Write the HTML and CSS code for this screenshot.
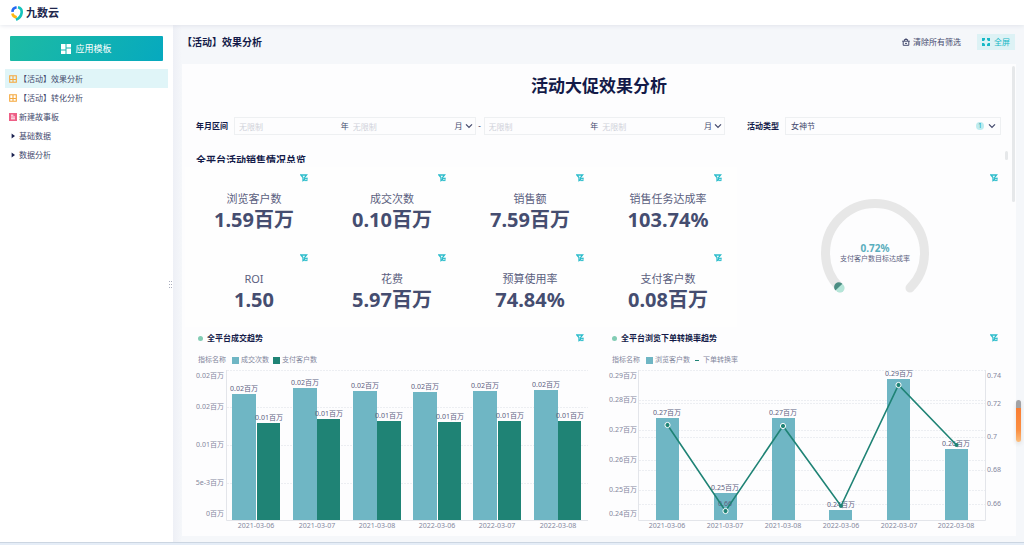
FILE: index.html
```html
<!DOCTYPE html>
<html lang="zh-CN">
<head>
<meta charset="utf-8">
<title>九数云</title>
<link rel="stylesheet" href="styles.css">
</head>
<body>
<svg class="defs" aria-hidden="true">
  <symbol id="filter" viewBox="0 0 8 8">
    <path d="M0.8 1H6.6L4.7 3.4V5.6L3 6.6V3.6Z" fill="none" stroke="currentColor" stroke-width="1.3"/>
    <path d="M4.6 4.4H7.4M7 3.6V6.4M4.4 6.6H7.4" fill="none" stroke="currentColor" stroke-width="1"/>
  </symbol>
  <symbol id="chevron" viewBox="0 0 8 8">
    <path d="M1 2.4L4 5.4L7 2.4" fill="none" stroke="currentColor" stroke-width="1.3"/>
  </symbol>
  <symbol id="board" viewBox="0 0 8 8">
    <path d="M0.7 0.7H7.3V7.3H0.7ZM4 0.7V7.3M0.7 4.5H7.3" fill="none" stroke="#f5a83c" stroke-width="1.1"/>
  </symbol>
</svg>

<header class="topbar">
  <svg class="logo" viewBox="0 0 12 16" fill="none" stroke-width="2.6">
    <path d="M1.4 6.8A5 5 0 0 1 5.6 2.2" stroke="#2468f2"/>
    <path d="M1.4 8.4A5 5 0 0 0 5.8 12.4" stroke="#fdb713"/>
    <path d="M7 2.2C9.8 2.8 11 5 10.6 8C10.2 11 8.4 13.2 5 14.8" stroke="#14c3bd"/>
  </svg>
  <span class="brand">九数云</span>
</header>

<div class="shell">
  <nav class="sidebar">
    <button class="template-btn" type="button">
      <svg viewBox="0 0 10 10" fill="#fff"><path d="M0 0H4.5V5.5H0ZM5.5 0H10V3.5H5.5ZM0 6.5H4.5V10H0ZM5.5 4.5H10V10H5.5Z"/></svg>
      应用模板
    </button>
    <a class="item active" href="#"><svg><use href="#board"/></svg><span>【活动】效果分析</span></a>
    <a class="item" href="#"><svg><use href="#board"/></svg><span>【活动】转化分析</span></a>
    <a class="item" href="#"><svg viewBox="0 0 8 8"><rect width="8" height="8" fill="#ee5f86"/><path d="M2 2.2H4.4M2 4H6M2 5.8H6" stroke="#fff" stroke-width="1"/></svg><span>新建故事板</span></a>
    <a class="item" href="#"><svg viewBox="0 0 8 8"><path d="M2.6 1.6L6 4L2.6 6.4Z" fill="#1b2250"/></svg><span>基础数据</span></a>
    <a class="item" href="#"><svg viewBox="0 0 8 8"><path d="M2.6 1.6L6 4L2.6 6.4Z" fill="#1b2250"/></svg><span>数据分析</span></a>
    <svg class="grip" viewBox="0 0 4 8" fill="#a9adbd"><path d="M0 0H1V1H0ZM2 0H3V1H2ZM0 3H1V4H0ZM2 3H3V4H2ZM0 6H1V7H0ZM2 6H3V7H2Z"/></svg>
  </nav>

  <main class="main">
    <div class="page-head">
      <h1>【活动】效果分析</h1>
      <button class="clear-btn" type="button">
        <svg viewBox="0 0 8 8" fill="none" stroke="currentColor"><path d="M0.2 3.2H7.8M1.2 3.2V7.3H6.8V3.2M2.4 3V1.5H5.6V3M4 0.2V1.5M3 5.4H5"/></svg>
        清除所有筛选
      </button>
      <button class="full-btn" type="button">
        <svg viewBox="0 0 8 8" fill="currentColor"><path d="M0 0H3V1.4L2 3H0ZM5 0H8V3H6L5 1.4ZM0 5H2L3 6.6V8H0ZM6 5H8V8H5V6.6Z"/></svg>
        全屏
      </button>
    </div>

    <section class="panel">
      <h2 class="title">活动大促效果分析</h2>
      <form class="filters">
        <div class="range">
          <label for="y1">年月区间</label>
          <div class="field">
            <input id="y1" placeholder="无限制"><span>年</span>
            <input placeholder="无限制" aria-label="起始月"><span>月</span>
            <svg><use href="#chevron"/></svg>
          </div>
          <span class="dash">-</span>
          <div class="field">
            <input placeholder="无限制" aria-label="结束年"><span>年</span>
            <input placeholder="无限制" aria-label="结束月"><span>月</span>
            <svg><use href="#chevron"/></svg>
          </div>
        </div>
        <div class="kind">
          <label for="kind">活动类型</label>
          <div class="field">
            <select id="kind"><option>女神节</option></select>
            <span class="count">1</span>
            <svg><use href="#chevron"/></svg>
          </div>
        </div>
      </form>
      <h3 class="overview">全平台活动销售情况总览</h3>

      <div class="grid">
        <article class="kpi"><svg class="fi"><use href="#filter"/></svg><span>浏览客户数</span><strong>1.59百万</strong></article>
        <article class="kpi"><svg class="fi"><use href="#filter"/></svg><span>成交次数</span><strong>0.10百万</strong></article>
        <article class="kpi"><svg class="fi"><use href="#filter"/></svg><span>销售额</span><strong>7.59百万</strong></article>
        <article class="kpi"><svg class="fi"><use href="#filter"/></svg><span>销售任务达成率</span><strong>103.74%</strong></article>
        <article class="gauge">
          <svg class="fi"><use href="#filter"/></svg>
          <svg class="plot" viewBox="0 0 276 148">
            <path d="M103 121A49.500 49.500 0 1 1 173 121" fill="none" stroke="#e7e7e7" stroke-width="9" stroke-linecap="round"/>
            <circle cx="103" cy="121" r="4.5" fill="#b5e5d8"/>
            <path d="M98.4 123.4A4.5 4.5 0 1 1 105.4 116.8Z" fill="#4b8d83"/>
            <text class="rate" x="138" y="85">0.72%</text>
            <text class="rate-name" x="138" y="94">支付客户数目标达成率</text>
          </svg>
        </article>
        <article class="kpi"><svg class="fi"><use href="#filter"/></svg><span>ROI</span><strong>1.50</strong></article>
        <article class="kpi"><svg class="fi"><use href="#filter"/></svg><span>花费</span><strong>5.97百万</strong></article>
        <article class="kpi"><svg class="fi"><use href="#filter"/></svg><span>预算使用率</span><strong>74.84%</strong></article>
        <article class="kpi"><svg class="fi"><use href="#filter"/></svg><span>支付客户数</span><strong>0.08百万</strong></article>

        <article class="chart">
          <svg class="fi"><use href="#filter"/></svg>
          <h4>全平台成交趋势</h4>
          <div class="legend"><span>指标名称</span><i class="sw blue"></i><span>成交次数</span><i class="sw green"></i><span>支付客户数</span></div>
          <svg class="plot" viewBox="0 0 414 168">
            <path class="gl" d="M42 3.5H403M42 40.5H403M42 78.5H403M42 116.5H403"/>
            <path class="ax" d="M41.500 3V153.500H403"/>
            <g class="yl"><text x="39" y="11">0.02百万</text><text x="39" y="42">0.02百万</text><text x="39" y="80">0.01百万</text><text x="39" y="118">5e-3百万</text><text x="39" y="149">0百万</text></g>
            <g class="blue-bars"><path d="M47 27H71V153H47ZM108 21H132V153H108ZM168 24H192V153H168ZM228 25H252V153H228ZM288 24H312V153H288ZM349 23H373V153H349Z"/></g>
            <g class="green-bars"><path d="M72 56H95V153H72ZM132 52H155V153H132ZM192 54H216V153H192ZM253 55H276V153H253ZM313 54H336V153H313ZM373 54H396V153H373Z"/></g>
            <g class="vl"><text x="59" y="24">0.02百万</text><text x="120" y="18">0.02百万</text><text x="180" y="21">0.02百万</text><text x="240" y="22">0.02百万</text><text x="300" y="21">0.02百万</text><text x="361" y="20">0.02百万</text>
            <text x="84" y="53">0.01百万</text><text x="144" y="49">0.01百万</text><text x="204" y="51">0.01百万</text><text x="265" y="52">0.01百万</text><text x="325" y="51">0.01百万</text><text x="385" y="51">0.01百万</text></g>
            <g class="xl"><text x="71" y="161">2021-03-06</text><text x="132" y="161">2021-03-07</text><text x="192" y="161">2021-03-08</text><text x="252" y="161">2022-03-06</text><text x="312" y="161">2022-03-07</text><text x="373" y="161">2022-03-08</text></g>
          </svg>
        </article>

        <article class="chart">
          <svg class="fi"><use href="#filter"/></svg>
          <h4>全平台浏览下单转换率趋势</h4>
          <div class="legend"><span>指标名称</span><i class="sw blue"></i><span>浏览客户数</span><i class="line"></i><span>下单转换率</span></div>
          <svg class="plot" viewBox="0 0 414 168">
            <path class="gl" d="M40 3.500H386M40 33.500H386M40 63.500H386M40 93.500H386M40 123.500H386M40 36.500H386M40 70.500H386M40 103.500H386M40 137.500H386"/>
            <path class="ax" d="M39.500 3V153.500H386.500V3"/>
            <g class="yl"><text x="38" y="11">0.29百万</text><text x="38" y="35">0.28百万</text><text x="38" y="65">0.27百万</text><text x="38" y="95">0.26百万</text><text x="38" y="125">0.25百万</text><text x="38" y="149">0.24百万</text></g>
            <g class="yr"><text x="388" y="11">0.74</text><text x="388" y="39">0.72</text><text x="388" y="72">0.7</text><text x="388" y="105">0.68</text><text x="388" y="139">0.66</text></g>
            <g class="blue-bars"><path d="M57 51H80V153H57ZM115 126H138V153H115ZM173 51H196V153H173ZM230 143H253V153H230ZM288 12H311V153H288ZM346 82H369V153H346Z"/></g>
            <g class="vl"><text x="68" y="48">0.27百万</text><text x="126" y="123">0.25百万</text><text x="184" y="48">0.27百万</text><text x="242" y="140">0.24百万</text><text x="300" y="9">0.29百万</text><text x="357" y="79">0.26百万</text><text x="126" y="139">0.66</text></g>
            <path class="trend" d="M68.500 58L126.500 144L184 59L242 139L299.500 18L357.500 78"/>
            <g fill="#1f8375"><circle cx="242" cy="139" r="2"/><circle cx="357.500" cy="78" r="2"/>
            <g stroke="#fff"><circle cx="68.500" cy="58" r="2.600"/><circle cx="126.500" cy="144" r="2.600"/><circle cx="184" cy="59" r="2.600"/><circle cx="299.500" cy="18" r="2.600"/></g></g>
            <g class="xl"><text x="68" y="161">2021-03-06</text><text x="126" y="161">2021-03-07</text><text x="184" y="161">2021-03-08</text><text x="242" y="161">2022-03-06</text><text x="300" y="161">2022-03-07</text><text x="357" y="161">2022-03-08</text></g>
          </svg>
        </article>
      </div>
      <i class="scroll outer"></i>
      <i class="scroll inner"></i>
    </section>
  </main>
</div>
<footer class="strip"></footer>
<i class="marker"></i>
</body>
</html>
```

FILE: styles.css
```css
* { box-sizing: border-box; }
body {
  margin: 0;
  min-height: 100vh;
  display: flex;
  flex-direction: column;
  overflow: hidden;
  font-family: "Noto Sans", "Noto Sans CJK SC", sans-serif;
  font-size: 8px;
  line-height: 12px;
  color: #454b6e;
  background: #fff;
}
h1, h2, h3, h4 { margin: 0; color: #131a48; }
button, input, select { font: inherit; color: inherit; border: 0; padding: 0; background: none; }
a { color: inherit; text-decoration: none; }
.defs { position: absolute; width: 0; height: 0; }

.topbar {
  display: flex;
  align-items: center;
  gap: 3px;
  height: 25px;
  padding-left: 11px;
  background: #fff;
  box-shadow: 0 0 5px #d9dde6;
  z-index: 1;
}
.logo { width: 12px; height: 16px; }
.brand { font-size: 11px; font-weight: 700; color: #20264c; }

.shell { flex: 1; display: flex; min-height: 0; }
.sidebar {
  position: relative;
  width: 173px;
  flex: none;
  padding: 11px 5px 0;
}
.template-btn {
  display: flex;
  align-items: center;
  justify-content: center;
  gap: 4px;
  width: calc(100% - 10px);
  height: 25px;
  margin: 0 5px 8px;
  border-radius: 1px;
  font-size: 9px;
  color: #fff;
  background: linear-gradient(120deg, #1dbba3, #06a9bf);
}
.template-btn svg { width: 10px; height: 10px; }
.item {
  display: flex;
  align-items: center;
  gap: 2px;
  height: 19px;
  padding-left: 4px;
}
.item svg { width: 8px; height: 8px; flex: none; }
.item.active { background: #e0f5f8; }
.grip { position: absolute; right: 0; top: 256px; width: 4px; height: 8px; }

.main {
  flex: 1;
  min-width: 0;
  padding: 0 8px 6px 9px;
  display: flex;
  flex-direction: column;
  background: linear-gradient(90deg, #eef0f6, #f5f7fa 9px);
}
.page-head { display: flex; align-items: center; height: 39px; padding: 0 1px 6px 0; }
.page-head h1 { flex: 1; font-size: 10px; line-height: 14px; }
.page-head button { display: flex; align-items: center; gap: 3px; height: 16px; }
.page-head svg { width: 8px; height: 8px; }
.clear-btn { margin-right: 16px; }
.page-head .full-btn { padding: 0 5px; gap: 4px; color: #16b8c6; background: #ddf2f5; }

.panel {
  position: relative;
  flex: 1;
  padding: 0 3px;
  background: #fdfdfe;
}
.title { padding-top: 10px; font-size: 17px; line-height: 24px; text-align: center; }
.filters { display: grid; grid-template-columns: 2fr 1fr; padding-top: 19px; }
.range, .kind { display: flex; align-items: center; padding-left: 11px; }
.kind { padding: 0 12px 0 10px; }
.filters label { flex: none; width: 38px; font-weight: 700; color: #131a48; }
.range { padding-right: 12px; }
.field {
  flex: 1;
  min-width: 0;
  display: flex;
  align-items: center;
  height: 18px;
  padding: 0 2px 0 4px;
  border: 1px solid #eef0f2;
}
.field input { flex: 1; width: 0; min-width: 0; height: 14px; }
.field input::placeholder { color: #d0d2da; }
.field span + input { margin-left: 4px; }
.field svg { width: 8px; height: 8px; margin-left: 2px; }
.field select { flex: 1; appearance: none; height: 14px; }
.kind .field { padding: 0 4px 0 5px; }
.field .count {
  width: 8px;
  height: 8px;
  border-radius: 4px;
  margin-right: 2px;
  font-size: 7px;
  line-height: 8px;
  text-align: center;
  color: #19a5b4;
  background: #bdecef;
}
.dash { width: 8px; text-align: center; }
.overview {
  height: 11px;
  margin: 17px 0 4px 11px;
  overflow: hidden;
  font-size: 10px;
  line-height: 16px;
}

.grid { display: grid; grid-template-columns: repeat(6, 1fr); grid-auto-rows: minmax(80px, auto); }
.grid article { position: relative; min-width: 0; }
.fi { position: absolute; top: 7px; right: 15px; width: 8px; height: 8px; color: #2bbccb; }
.kpi { display: flex; flex-direction: column; align-items: center; padding-top: 23px; background: #fefefe; }
.kpi span { font-size: 11px; line-height: 18px; color: #5b6080; }
.kpi strong { font-size: 20px; line-height: 24px; font-weight: 700; color: #454d70; }
.gauge { grid-column: 5 / 7; grid-row: 1 / 3; }
.plot { display: block; width: 100%; height: auto; overflow: visible; }
.plot text { font-size: 7px; fill: #5c617e; }
.plot .rate { font-size: 10px; font-weight: 700; fill: #59aebd; text-anchor: middle; }
.plot .rate-name { text-anchor: middle; }

.chart { grid-column: span 3; }
.chart h4 { display: flex; align-items: center; gap: 4px; height: 22px; padding-left: 13px; font-size: 8px; }
.chart h4::before { content: ""; width: 5px; height: 5px; border-radius: 50%; background: #82ccb4; }
.legend { display: flex; align-items: center; height: 18px; padding: 4px 0 0 13px; font-size: 7px; color: #83879d; }
.legend .sw { width: 7px; height: 7px; margin: 0 2px 0 6px; }
.legend .blue { background: #6fb6c4; }
.legend .green { background: #1f8375; margin-left: 4px; }
.legend .line { width: 4px; height: 1px; margin: 0 4px 0 5px; background: #1f8375; }
.plot .gl { stroke: #eceef2; stroke-dasharray: 2 1; }
.plot .ax { stroke: #e3e5ea; fill: none; }
.plot .yl text { text-anchor: end; fill: #83879d; }
.plot .yr text { fill: #83879d; }
.plot .xl text { text-anchor: middle; fill: #83879d; }
.plot .vl text { text-anchor: middle; }
.blue-bars { fill: #6fb6c4; }
.green-bars { fill: #1f8375; }
.trend { fill: none; stroke: #1f8375; stroke-width: 1.6; }

.scroll { position: absolute; border-radius: 2px; background: #e6e8ea; }
.outer { top: 2px; right: 1px; width: 3px; height: 136px; }
.inner { top: 87px; right: 8px; width: 3px; height: 9px; }
.strip { height: 3px; border-top: 1px solid #cbd5e1; background: #e5edf7; }
.marker {
  position: absolute;
  right: 3px;
  top: 400px;
  width: 5px;
  height: 42px;
  border-radius: 3px;
  background: linear-gradient(#a2a2a5 8px, #fa7d32 8px, #fb8f42 30px, #fbbd7d);
  box-shadow: 0 2px 4px #ddd;
}
```
